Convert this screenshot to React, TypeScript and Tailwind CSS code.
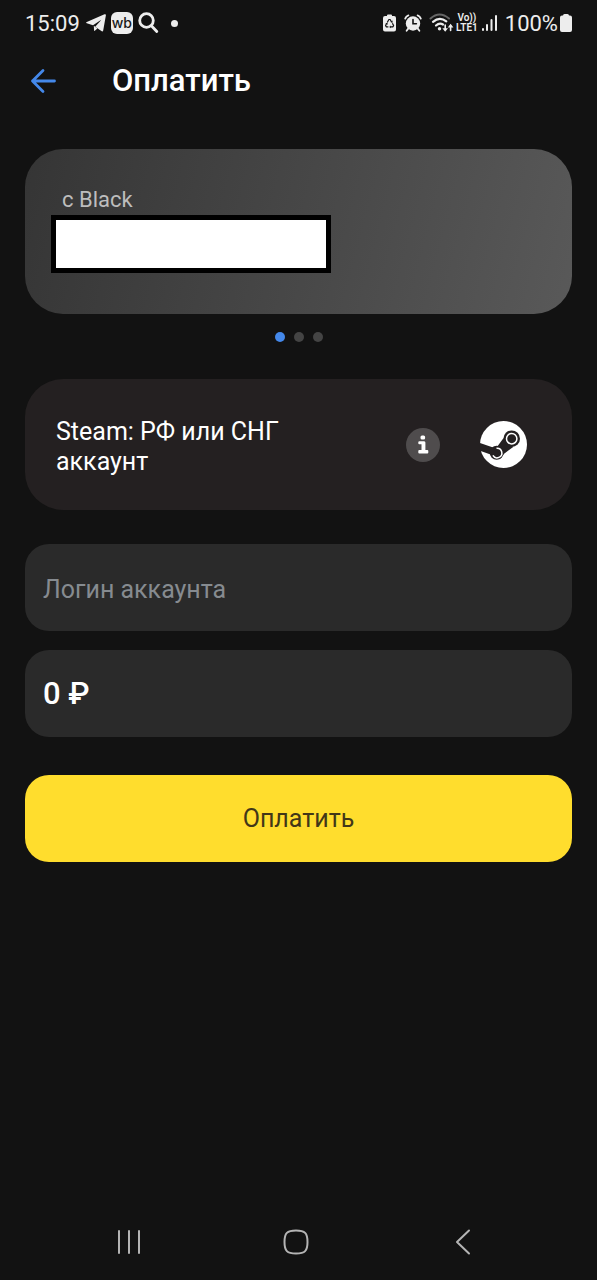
import React, { useState } from 'react';

const ArrowIcon = () => (
  <svg width="26" height="26" viewBox="0 0 26 26" fill="none" stroke="#4488ea" strokeWidth="2.8" strokeLinecap="round" strokeLinejoin="round">
    <path d="M24.500 13H2.500M13 2.500 2.500 13 13 23.500" />
  </svg>
);

const TelegramIcon = () => (
  <svg width="20" height="18" viewBox="0 0 20 18" fill="#ededed">
    <path d="M19.900 1.200 17.200 16.400q-.4 1.500-1.800.7l-6.200-4.300 5.600-6.400q.1-.4-.3-.2L7 11.200.8 9.300q-1.300-.6 0-1.300L18.500.3q1.600-.4 1.400.9z" />
    <path d="m7.800 11.800 3.600 2.600-2.600 2.400q-.6.4-.7-.3z" />
  </svg>
);

const SearchIcon = () => (
  <svg width="21" height="22" viewBox="0 0 21 22" fill="none" stroke="#ededed" strokeWidth="2.8" strokeLinecap="round">
    <circle cx="8.500" cy="8.500" r="6.800" />
    <path d="m13.600 14 5.200 5.500" />
  </svg>
);

const BatterySaverIcon = () => (
  <svg width="13" height="18" viewBox="0 0 13 18">
    <path fill="#ededed" d="M4 1.500Q4 .5 5 .5h3q1 0 1 1V2h2q2 0 2 2v11.500q0 2-2 2H2q-2 0-2-2V4q0-2 2-2h2z" />
    <g fill="none" stroke="#121212" strokeWidth="1.200" strokeLinejoin="round">
      <path d="m4.200 8.500 1.700-3h1.200L8.600 8" />
      <path d="m9.400 9.300 1.200 2.300-.8 1.300H7.400" />
      <path d="M5.400 12.900h-2l-.8-1.300 1.100-2.300" />
    </g>
    <path fill="#121212" d="m9.600 6.600-.1 2.300-2-.9zM7.800 11.500v2.800l-1.600-1.400zM2.400 9.600l2-.9.400 2z" />
  </svg>
);

const AlarmIcon = () => (
  <svg width="18" height="18" viewBox="0 0 18 18" fill="none" strokeLinecap="round">
    <circle cx="9" cy="9.500" r="7.200" fill="#ededed" />
    <path stroke="#ededed" strokeWidth="1.800" d="M1.200 4.600Q2 2.200 4.400 1.400M16.800 4.600Q16 2.200 13.600 1.400M4.200 14.600 2.600 16.700M13.800 14.600l1.600 2.100" />
    <path stroke="#121212" strokeWidth="1.600" d="M9 5.600v4.200h3.400" />
  </svg>
);

const WifiIcon = () => (
  <svg width="26" height="20" viewBox="0 0 26 20" fill="none" strokeLinecap="round">
    <path stroke="#666" strokeWidth="2" d="M1.500 5.500Q10.500-2.500 20 5.500" />
    <path stroke="#ededed" strokeWidth="2.200" d="M4 8.800Q10.600 3 17.300 8.300M7 12.500Q10.500 9.300 14 11.500" />
    <circle cx="10.500" cy="15.800" r="1.700" fill="#ededed" />
    <path stroke="#ededed" strokeWidth="1.600" d="M16.200 12v5M21.600 17.500v-5" />
    <path fill="#ededed" d="M13.400 15.200h5.600l-2.800 3.600zM18.800 14.400h5.600l-2.800-3.600z" />
  </svg>
);

const SignalIcon = () => (
  <svg width="16" height="18" viewBox="0 0 16 18" fill="#ededed">
    <rect x="0" y="14" width="2" height="3" rx="1" />
    <rect x="4" y="10" width="2" height="7" rx="1" />
    <rect x="8.500" y="5" width="2" height="12" rx="1" />
    <rect x="13" y="1" width="2" height="16" rx="1" />
  </svg>
);

const BatteryIcon = () => (
  <svg width="12" height="18" viewBox="0 0 12 18" fill="#ededed">
    <path d="M3 1.500Q3 0 4.500 0h3Q9 0 9 1.500h1q2 0 2 2V16q0 2-2 2H2q-2 0-2-2V3.500q0-2 2-2h1z" />
  </svg>
);

const InfoIcon = () => (
  <svg width="34" height="34" viewBox="0 0 34 34">
    <circle cx="17" cy="17" r="17" fill="#4f4c4d" />
    <g fill="#fff">
      <rect x="14.500" y="7.500" width="4.600" height="4" rx="1.500" />
      <path d="M13.300 13.200h4.500q1.600 0 1.600 1.400v7.500h1.900q1 0 1 1v1.500q0 1-1 1h-8q-1 0-1-1v-1.500q0-1 1-1h2.200v-5.800h-2.200q-1 0-1-1v-1.100q0-1 1-1z" />
    </g>
  </svg>
);

const SteamIcon = () => (
  <svg width="48" height="48" viewBox="0 0 48 48" fill="none">
    <circle cx="23.500" cy="23.500" r="23.500" fill="#fff" />
    {/* linkage */}
    <g fill="#242021">
      <circle cx="31.700" cy="17.700" r="8.300" />
      <circle cx="16.700" cy="31.700" r="7" />
      <path d="M23.400 17.200 17.700 25l-6 3.500 8.500 9.200 3.900-5 9.100-6.800z" />
      <path d="M-1 21.600 17.500 28v8L-1 29.400z" />
    </g>
    <circle cx="31.700" cy="17.700" r="5.200" stroke="#fff" strokeWidth="1.500" />
    <path d="M16.500 27.200a4.800 4.800 0 1 1-3.600 7.200" stroke="#fff" strokeWidth="1.500" />
  </svg>
);

const StatusBar = () => (
  <div className="flex h-[46px] items-center justify-between px-[25px] text-[22px] text-[#ededed]">
    <div className="flex items-center">
      <span>15:09</span>
      <span className="ml-1.5"><TelegramIcon /></span>
      <span className="ml-[5px] flex h-[22px] w-[22px] items-center justify-center rounded-md bg-[#ededed] pb-0.5 font-['Inter',sans-serif] text-[14px] font-medium text-[#1a1a1a]">
        wb
      </span>
      <span className="ml-[5px]"><SearchIcon /></span>
      <span className="ml-3 h-[7px] w-[7px] rounded-full bg-[#ededed]" />
    </div>
    <div className="flex items-center">
      <BatterySaverIcon />
      <span className="ml-2"><AlarmIcon /></span>
      <span className="ml-[7px]"><WifiIcon /></span>
      <span className="ml-px flex flex-col text-[10px] leading-[10px] font-semibold">
        <span className="text-center">Vo))</span>
        <span>LTE1</span>
      </span>
      <span className="ml-1"><SignalIcon /></span>
      <span className="ml-[7px]">100%</span>
      <span className="ml-0.5"><BatteryIcon /></span>
    </div>
  </div>
);

const NavBar = () => (
  <nav className="mt-auto flex h-[76px] items-center justify-between pr-[104px] pl-[99px]">
    <button aria-label="Недавние" className="flex w-[60px] justify-center">
      <svg width="24" height="24" viewBox="0 0 24 24" stroke="#b4b4b4" strokeWidth="2" strokeLinecap="round">
        <path d="M2 1v22M12 1v22M22 1v22" />
      </svg>
    </button>
    <button aria-label="Домой" className="flex w-[60px] justify-center">
      <svg width="26" height="26" viewBox="0 0 26 26" fill="none" stroke="#b4b4b4" strokeWidth="2">
        <path d="M13 1.500c9 0 11.500 2.500 11.500 11.500S22 24.500 13 24.500 1.500 22 1.500 13 4 1.500 13 1.500z" />
      </svg>
    </button>
    <button aria-label="Назад" className="flex w-[60px] justify-center">
      <svg width="16" height="26" viewBox="0 0 16 26" fill="none" stroke="#b4b4b4" strokeWidth="2" strokeLinecap="round" strokeLinejoin="round">
        <path d="M14 1.500 2 13l12 11.500" />
      </svg>
    </button>
  </nav>
);

const App: React.FC = () => {
  const [login, setLogin] = useState('');
  const [amount, setAmount] = useState('0 ₽');

  return (
    <div className="flex min-h-screen flex-col bg-[#121212] font-['Roboto',sans-serif] text-white">
      <StatusBar />

      <header className="flex h-[70px] items-center pl-[30px]">
        <button aria-label="Вернуться">
          <ArrowIcon />
        </button>
        <h1 className="ml-14 text-[31px] font-medium">Оплатить</h1>
      </header>

      <main className="flex flex-col px-[25px] pt-[33px] pb-8">
        <section className="h-[165px] rounded-[38px] bg-linear-[105deg] from-[#353535] to-[#595959] pt-[35px] pl-[26px]">
          <p className="pl-[11px] text-[22px] leading-[31px] text-[#bdbdbd]">с Black</p>
          <div className="h-[58px] w-[280px] border-[5px] border-black bg-white" />
        </section>

        <div className="mt-[18px] flex justify-center gap-[9px]">
          <span className="h-2.5 w-2.5 rounded-full bg-[#4488ea]" />
          <span className="h-2.5 w-2.5 rounded-full bg-[#444]" />
          <span className="h-2.5 w-2.5 rounded-full bg-[#444]" />
        </div>

        <section className="mt-[37px] flex h-[131px] items-center rounded-[38px] bg-[#242021] pr-[44px] pl-[31px]">
          <h2 className="w-[240px] pt-1 text-[25px] leading-[30px]">Steam: РФ или СНГ аккаунт</h2>
          <button aria-label="Информация" className="ml-auto">
            <InfoIcon />
          </button>
          <span className="ml-10"><SteamIcon /></span>
        </section>

        <form className="mt-[34px] flex flex-col" onSubmit={(e) => e.preventDefault()}>
          <input
            aria-label="Логин аккаунта"
            placeholder="Логин аккаунта"
            value={login}
            onChange={(e) => setLogin(e.target.value)}
            className="h-[87px] w-full rounded-3xl bg-[#2a2a2a] px-[18px] pt-1 text-[25px] placeholder:text-[#868b90] focus:outline-none"
          />
          <input
            aria-label="Сумма"
            value={amount}
            onChange={(e) => setAmount(e.target.value)}
            className="mt-[19px] h-[87px] w-full rounded-3xl bg-[#2a2a2a] px-[18px] text-[31px] font-medium focus:outline-none"
          />
          <button type="submit" className="mt-[38px] h-[87px] w-full rounded-3xl bg-[#ffdd2d] text-[25px] text-[#423718]">
            Оплатить
          </button>
        </form>
      </main>

      <NavBar />
    </div>
  );
};

export default App;
